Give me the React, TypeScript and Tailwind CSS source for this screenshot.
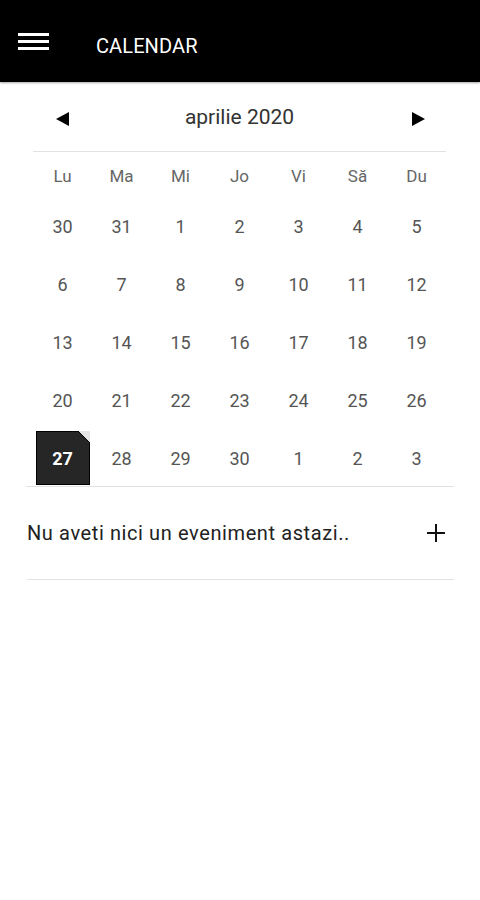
import React from "react";

const weekDays = ["Lu", "Ma", "Mi", "Jo", "Vi", "Să", "Du"];

const weeks: number[][] = [
  [30, 31, 1, 2, 3, 4, 5],
  [6, 7, 8, 9, 10, 11, 12],
  [13, 14, 15, 16, 17, 18, 19],
  [20, 21, 22, 23, 24, 25, 26],
  [27, 28, 29, 30, 1, 2, 3],
];

const Header: React.FC = () => (
  <div className="h-[82px] bg-black flex items-center pt-[10px] shadow-[0_1px_2px_rgba(0,0,0,0.35)] relative z-10">
    <div className="ml-[18px] mb-[9px] w-[31px] flex flex-col gap-[4px]">
      <span className="block h-[3px] bg-white"></span>
      <span className="block h-[3px] bg-white"></span>
      <span className="block h-[3px] bg-white"></span>
    </div>
    <div className="ml-[47px] text-white text-[20px] tracking-[0.1px]">
      CALENDAR
    </div>
  </div>
);

const DayCell: React.FC<{ day: number; selected?: boolean }> = ({
  day,
  selected,
}) => {
  if (selected) {
    return (
      <div className="h-[58px] flex items-center justify-center">
        <div className="relative w-[54px] h-[54px] bg-[#262626] border border-black flex items-center justify-center">
          <svg
            className="absolute -top-px -right-px"
            width="12"
            height="12"
            viewBox="0 0 12 12"
          >
            <polygon points="0,0 12,0 12,12" fill="#e4e4e4" />
            <line x1="0" y1="0" x2="12" y2="12" stroke="#000" strokeWidth="1" />
          </svg>
          <span className="text-white text-[18px] font-bold">{day}</span>
        </div>
      </div>
    );
  }
  return (
    <div className="h-[58px] flex items-center justify-center text-[18px] text-[#555]">
      {day}
    </div>
  );
};

export default function App() {
  return (
    <div className="w-[480px] h-[900px] bg-white font-['Roboto',sans-serif]">
      <Header />

      <div className="ml-[33px] w-[413px]">
        <div className="h-[69px] flex items-center">
          <div className="w-[59px] flex justify-center pt-[4px]">
            <svg width="13" height="14" viewBox="0 0 13 14">
              <polygon points="13,0 13,14 0,7" fill="#000" />
            </svg>
          </div>
          <div className="flex-1 text-center text-[21px] text-[#333] pt-[2px]">
            aprilie 2020
          </div>
          <div className="w-[59px] flex justify-center pt-[4px] pl-[3px]">
            <svg width="13" height="14" viewBox="0 0 13 14">
              <polygon points="0,0 0,14 13,7" fill="#000" />
            </svg>
          </div>
        </div>
        <div className="h-px bg-[#e2e2e2]"></div>

        <div className="grid grid-cols-7 h-[45px] items-center pt-[4px]">
          {weekDays.map((d) => (
            <div key={d} className="text-center text-[17px] text-[#666]">
              {d}
            </div>
          ))}
        </div>

        {weeks.map((week, i) => (
          <div key={i} className="grid grid-cols-7">
            {week.map((day, j) => (
              <DayCell key={j} day={day} selected={i === 4 && j === 0} />
            ))}
          </div>
        ))}
      </div>

      <div className="mx-[26px] -mt-px h-px bg-[#e2e2e2]"></div>

      <div className="mx-[26px] h-[92px] flex items-center justify-between">
        <span className="pl-px text-[20px] tracking-[0.6px] text-[#222]">
          Nu aveti nici un eveniment astazi..
        </span>
        <svg className="mr-[9px]" width="18" height="18" viewBox="0 0 18 18">
          <path d="M9 0V18M0 9H18" stroke="#111" strokeWidth="2" />
        </svg>
      </div>
      <div className="mx-[27px] w-[427px] h-px bg-[#e2e2e2]"></div>
    </div>
  );
}
